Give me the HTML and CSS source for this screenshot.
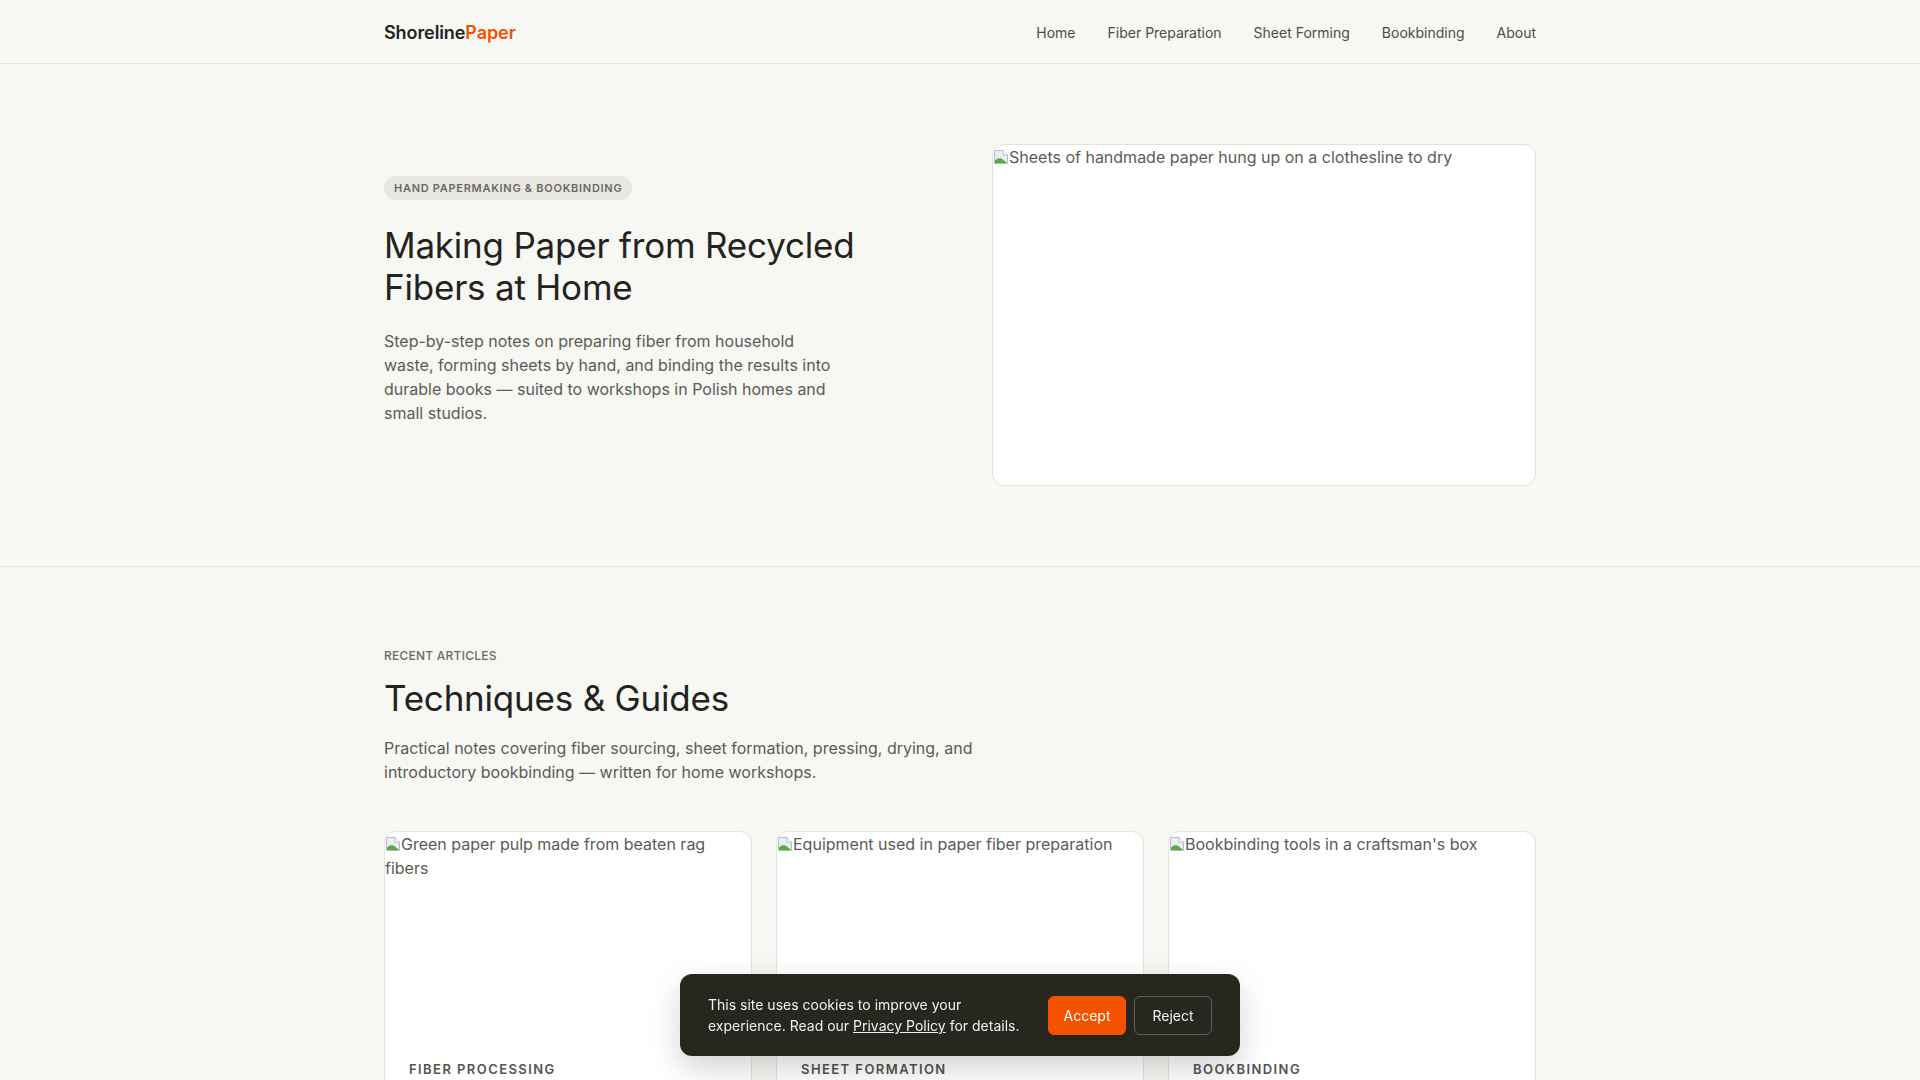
FILE: index.html
```
<!doctype html>
<html lang="en">
<head>
<meta charset="utf-8">
<meta name="viewport" content="width=device-width, initial-scale=1.0">
<link rel="stylesheet" href="styles.css">
<title>ShorelinePaper — Making Paper from Recycled Fibers at Home</title>
</head>
<body>

<header class="site-header">
    <div class="wrap header-inner">
        <a class="logo" href="#">Shoreline<span>Paper</span></a>
        <nav class="nav">
            <a href="#">Home</a>
            <a href="#">Fiber Preparation</a>
            <a href="#">Sheet Forming</a>
            <a href="#">Bookbinding</a>
            <a href="#">About</a>
        </nav>
    </div>
</header>

<section class="hero">
    <div class="wrap hero-grid">
        <div class="hero-text">
            <span class="badge">Hand papermaking &amp; bookbinding</span>
            <h1>Making Paper from Recycled Fibers at Home</h1>
            <p>Step-by-step notes on preparing fiber from household waste, forming sheets by hand, and binding the results into durable books — suited to workshops in Polish homes and small studios.</p>
        </div>
        <div class="hero-image">
            <div class="alt"><svg class="broken" width="16" height="16" viewBox="0 0 16 16"><path d="M1.5 1.5h8.5l4.5 4.5v8.5h-13z" fill="#e9eef5" stroke="#b3bcc8"/><path d="M10 1.5v4.5h4.5" fill="#fff" stroke="#b3bcc8"/><path d="M2 14V11.5C5 8.5 8 9 10 10.5L14 14z" fill="#5aa93c"/></svg>Sheets of handmade paper hung up on a clothesline to dry</div>
        </div>
    </div>
</section>

<section class="articles">
    <div class="wrap">
        <p class="eyebrow">Recent articles</p>
        <h2>Techniques &amp; Guides</h2>
        <p class="lead">Practical notes covering fiber sourcing, sheet formation, pressing, drying, and introductory bookbinding — written for home workshops.</p>

        <div class="cards">
            <article class="card">
                <div class="card-img">
                    <div class="alt"><svg class="broken" width="16" height="16" viewBox="0 0 16 16"><path d="M1.5 1.5h8.5l4.5 4.5v8.5h-13z" fill="#e9eef5" stroke="#b3bcc8"/><path d="M10 1.5v4.5h4.5" fill="#fff" stroke="#b3bcc8"/><path d="M2 14V11.5C5 8.5 8 9 10 10.5L14 14z" fill="#5aa93c"/></svg>Green paper pulp made from beaten rag fibers</div>
                </div>
                <div class="card-body">
                    <p class="card-tag">Fiber processing</p>
                    <h3>Beating rag fibers into pulp</h3>
                    <p>How to cut, soak and beat cotton rags into a pulp that forms strong sheets.</p>
                </div>
            </article>
            <article class="card">
                <div class="card-img">
                    <div class="alt"><svg class="broken" width="16" height="16" viewBox="0 0 16 16"><path d="M1.5 1.5h8.5l4.5 4.5v8.5h-13z" fill="#e9eef5" stroke="#b3bcc8"/><path d="M10 1.5v4.5h4.5" fill="#fff" stroke="#b3bcc8"/><path d="M2 14V11.5C5 8.5 8 9 10 10.5L14 14z" fill="#5aa93c"/></svg>Equipment used in paper fiber preparation</div>
                </div>
                <div class="card-body">
                    <p class="card-tag">Sheet formation</p>
                    <h3>Building a mould and deckle</h3>
                    <p>A simple frame for pulling even sheets from the vat, made with basic tools.</p>
                </div>
            </article>
            <article class="card">
                <div class="card-img">
                    <div class="alt"><svg class="broken" width="16" height="16" viewBox="0 0 16 16"><path d="M1.5 1.5h8.5l4.5 4.5v8.5h-13z" fill="#e9eef5" stroke="#b3bcc8"/><path d="M10 1.5v4.5h4.5" fill="#fff" stroke="#b3bcc8"/><path d="M2 14V11.5C5 8.5 8 9 10 10.5L14 14z" fill="#5aa93c"/></svg>Bookbinding tools in a craftsman's box</div>
                </div>
                <div class="card-body">
                    <p class="card-tag">Bookbinding</p>
                    <h3>Your first pamphlet stitch</h3>
                    <p>Folding, piercing and sewing a single signature into a small notebook.</p>
                </div>
            </article>
        </div>
    </div>
</section>

<div class="cookie">
    <p>This site uses cookies to improve your experience. Read our <a href="#">Privacy Policy</a> for details.</p>
    <div class="cookie-actions">
        <button class="btn btn-accept">Accept</button>
        <button class="btn btn-reject">Reject</button>
    </div>
</div>

</body>
</html>
```

FILE: styles.css
```
* {
    box-sizing: border-box;
}
h1,
h2,
h3,
p {
    margin: 0;
    padding: 0;
}
body {
    margin: 0;
    font-family: Inter, "Noto Sans", "Liberation Sans", sans-serif;
    font-size: 16px;
    line-height: 24px;
    color: #5c5b55;
    background-color: #f7f7f3;
}
a {
    color: inherit;
    text-decoration: none;
}
.wrap {
    max-width: 1152px;
    margin: 0 auto;
}

/* header */
.site-header {
    height: 64px;
    padding-top: 2px;
    border-bottom: 1px solid #e4e3de;
}
.header-inner {
    height: 100%;
    display: flex;
    align-items: center;
    justify-content: space-between;
}
.logo {
    font-size: 18px;
    font-weight: 600;
    color: #23221e;
    letter-spacing: -0.005em;
}
.logo span {
    color: #f25200;
}
.nav {
    display: flex;
    gap: 32px;
}
.nav a {
    font-size: 14px;
    color: #4d4c47;
}

/* hero */
.hero {
    padding: 80px 0;
    border-bottom: 1px solid #e4e3de;
}
.hero-grid {
    display: grid;
    grid-template-columns: 1fr 1fr;
    gap: 64px;
    align-items: center;
}
.badge {
    display: inline-block;
    padding: 4px 10px;
    border-radius: 999px;
    background-color: #e8e7e2;
    color: #6b6a64;
    font-size: 11px;
    line-height: 16px;
    font-weight: 600;
    letter-spacing: 0.065em;
    text-transform: uppercase;
}
.hero h1 {
    margin-top: 24px;
    font-size: 35px;
    line-height: 42px;
    font-weight: 400;
    color: #23221e;
    letter-spacing: -0.006em;
}
.hero-text p {
    margin-top: 21px;
    margin-bottom: 32px;
    max-width: 456px;
}
.hero-image {
    height: 342px;
    background-color: #fff;
    border: 1px solid #e4e3de;
    border-radius: 12px;
    overflow: hidden;
}
.alt {
    color: #5c5b55;
}
.broken {
    vertical-align: -2px;
}

/* articles */
.articles {
    padding: 80px 0;
}
.eyebrow {
    font-size: 12px;
    line-height: 18px;
    font-weight: 500;
    letter-spacing: 0.02em;
    text-transform: uppercase;
    color: #6b6a64;
}
.articles h2 {
    margin-top: 12px;
    font-size: 35px;
    line-height: 42px;
    font-weight: 400;
    color: #23221e;
    letter-spacing: -0.006em;
}
.lead {
    margin-top: 17px;
    max-width: 640px;
}
.cards {
    margin-top: 47px;
    display: grid;
    grid-template-columns: repeat(3, 1fr);
    gap: 24px;
}
.card {
    background-color: #fff;
    border: 1px solid #e4e3de;
    border-radius: 12px;
    overflow: hidden;
}
.card-img {
    aspect-ratio: 16 / 9;
}
.card-body {
    padding: 21px 24px 24px;
}
.card-tag {
    font-size: 13px;
    line-height: 20px;
    font-weight: 600;
    letter-spacing: 0.11em;
    text-transform: uppercase;
    color: #55544e;
}
.card h3 {
    margin-top: 8px;
    font-size: 20px;
    line-height: 28px;
    font-weight: 500;
    color: #23221e;
}
.card-body p:last-child {
    margin-top: 8px;
    font-size: 15px;
}

/* cookie banner */
.cookie {
    position: fixed;
    left: 50%;
    bottom: 24px;
    transform: translateX(-50%);
    width: 560px;
    display: flex;
    align-items: center;
    gap: 24px;
    padding: 20px 28px;
    background-color: #27261f;
    border-radius: 12px;
    box-shadow: 0 12px 32px rgba(0, 0, 0, 0.18);
}
.cookie p {
    flex: 1;
    font-size: 14px;
    line-height: 21px;
    color: #f2f1ec;
}
.cookie a {
    text-decoration: underline;
}
.cookie-actions {
    display: flex;
    gap: 8px;
}
.btn {
    min-width: 78px;
    font-family: inherit;
    font-size: 14px;
    line-height: 21px;
    padding: 8px 12px;
    border-radius: 6px;
    cursor: pointer;
}
.btn-accept {
    background-color: #f55200;
    border: 1px solid #f55200;
    color: #fff;
}
.btn-reject {
    background-color: transparent;
    border: 1px solid #5e5d57;
    color: #f2f1ec;
}
```
